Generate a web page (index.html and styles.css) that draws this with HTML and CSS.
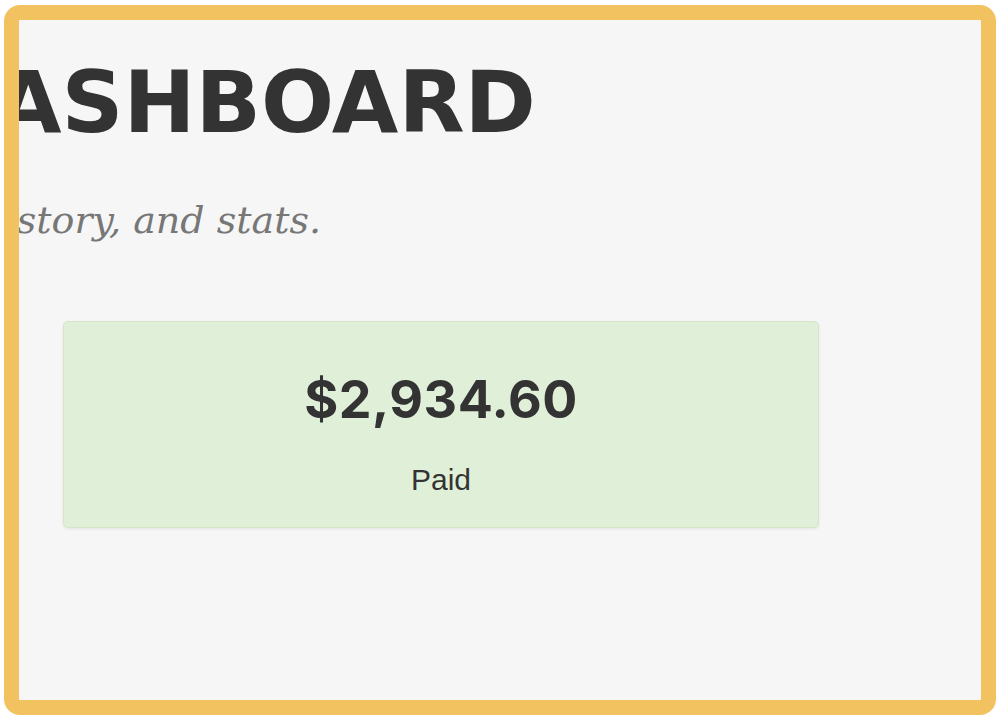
FILE: index.html
```html
<!DOCTYPE html>
<html lang="en">
<head>
<meta charset="utf-8">
<title>Dashboard</title>
<link rel="stylesheet" href="styles.css">
</head>
<body>
<div class="frame">
  <main class="page">
    <header class="page-head">
      <div class="title-row">
        <h1 class="title">DASHBOARD</h1>
      </div>
      <div class="subtitle-row">
        <p class="subtitle">Invoices, payment history, and stats.</p>
      </div>
    </header>
    <section class="stats">
      <div class="stat-card">
        <div class="stat-value">$2,934.60</div>
        <div class="stat-label">Paid</div>
      </div>
    </section>
  </main>
</div>
</body>
</html>
```

FILE: styles.css
```css
html, body {
  margin: 0;
  padding: 0;
  background: #ffffff;
}

.frame {
  box-sizing: border-box;
  margin: 5px 4px;
  width: 992px;
  height: 710px;
  border: 15px solid #f2c261;
  border-radius: 16px;
  background: #f6f6f6;
  overflow: hidden;
}

.title-row {
  display: flex;
  justify-content: flex-end;
  width: 517px;
  padding-top: 32px;
}

.title {
  flex: none;
  margin: 0;
  font-family: "DejaVu Sans", "Liberation Sans", sans-serif;
  font-weight: 700;
  font-size: 86px;
  line-height: 100px;
  color: #333333;
  white-space: nowrap;
}

.subtitle-row {
  display: flex;
  justify-content: flex-end;
  width: 302px;
  padding-top: 45px;
}

.subtitle {
  flex: none;
  margin: 0;
  font-family: "DejaVu Serif", serif;
  font-style: italic;
  font-size: 38px;
  line-height: 46px;
  color: #777777;
  white-space: nowrap;
}

.stats {
  padding: 78px 0 0 44px;
}

.stat-card {
  box-sizing: border-box;
  width: 756px;
  height: 207px;
  background: #e0f0d8;
  border: 1px solid #d3e7c6;
  border-radius: 5px;
  box-shadow: 0 1px 3px rgba(0,0,0,0.08);
  display: flex;
  flex-direction: column;
  align-items: center;
  padding-top: 48px;
}

.stat-value {
  font-family: Inter, "Liberation Sans", sans-serif;
  font-weight: 700;
  font-size: 52px;
  line-height: 60px;
  letter-spacing: 0.5px;
  color: #333333;
}

.stat-label {
  margin-top: 32px;
  font-family: "Liberation Sans", Arial, sans-serif;
  font-size: 30px;
  line-height: 36px;
  color: #333333;
}
```
